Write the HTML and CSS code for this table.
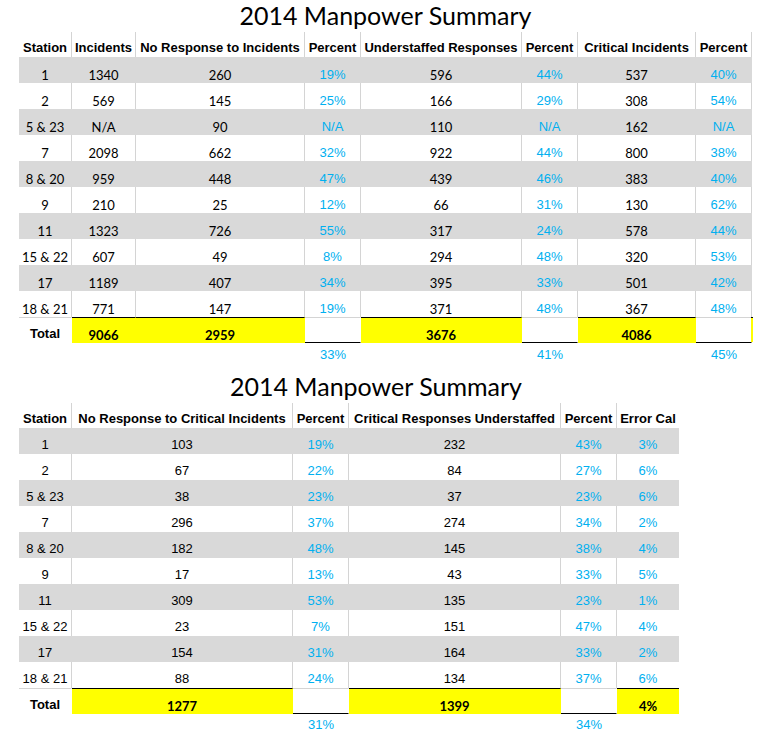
FILE: index.html
```html
<!DOCTYPE html>
<html lang="en">
<head>
<meta charset="utf-8">
<title>2014 Manpower Summary</title>
<link rel="stylesheet" href="styles.css">
</head>
<body>
<div class="sheet">
  <div class="title">2014 Manpower Summary</div>
  <table class="grid grid-top">
    <colgroup>
      <col class="c53"><col class="c64"><col class="c169"><col class="c56"><col class="c161"><col class="c56"><col class="c118"><col class="c56">
    </colgroup>
    <thead>
      <tr class="head">
        <th>Station</th><th>Incidents</th><th>No Response to Incidents</th><th>Percent</th><th>Understaffed Responses</th><th>Percent</th><th>Critical Incidents</th><th>Percent</th>
      </tr>
    </thead>
    <tbody>
      <tr class="shade"><td>1</td><td>1340</td><td>260</td><td class="pct">19%</td><td>596</td><td class="pct">44%</td><td>537</td><td class="pct">40%</td></tr>
      <tr><td>2</td><td>569</td><td>145</td><td class="pct">25%</td><td>166</td><td class="pct">29%</td><td>308</td><td class="pct">54%</td></tr>
      <tr class="shade"><td>5 &amp; 23</td><td>N/A</td><td>90</td><td class="pct">N/A</td><td>110</td><td class="pct">N/A</td><td>162</td><td class="pct">N/A</td></tr>
      <tr><td>7</td><td>2098</td><td>662</td><td class="pct">32%</td><td>922</td><td class="pct">44%</td><td>800</td><td class="pct">38%</td></tr>
      <tr class="shade"><td>8 &amp; 20</td><td>959</td><td>448</td><td class="pct">47%</td><td>439</td><td class="pct">46%</td><td>383</td><td class="pct">40%</td></tr>
      <tr><td>9</td><td>210</td><td>25</td><td class="pct">12%</td><td>66</td><td class="pct">31%</td><td>130</td><td class="pct">62%</td></tr>
      <tr class="shade"><td>11</td><td>1323</td><td>726</td><td class="pct">55%</td><td>317</td><td class="pct">24%</td><td>578</td><td class="pct">44%</td></tr>
      <tr><td>15 &amp; 22</td><td>607</td><td>49</td><td class="pct">8%</td><td>294</td><td class="pct">48%</td><td>320</td><td class="pct">53%</td></tr>
      <tr class="shade"><td>17</td><td>1189</td><td>407</td><td class="pct">34%</td><td>395</td><td class="pct">33%</td><td>501</td><td class="pct">42%</td></tr>
      <tr><td>18 &amp; 21</td><td>771</td><td>147</td><td class="pct">19%</td><td>371</td><td class="pct">48%</td><td>367</td><td class="pct">48%</td></tr>
      <tr class="total"><td class="lbl">Total</td><td class="y">9066</td><td class="y">2959</td><td class="w"></td><td class="y">3676</td><td class="w"></td><td class="y">4086</td><td class="w ext"></td></tr>
      <tr class="foot"><td></td><td></td><td></td><td class="pct">33%</td><td></td><td class="pct">41%</td><td></td><td class="pct">45%</td></tr>
    </tbody>
  </table>

  <div class="title title-2">2014 Manpower Summary</div>
  <table class="grid grid-bottom">
    <colgroup>
      <col class="c53"><col class="c221"><col class="c56"><col class="c212"><col class="c56"><col class="c62">
    </colgroup>
    <thead>
      <tr class="head">
        <th>Station</th><th>No Response to Critical Incidents</th><th>Percent</th><th>Critical Responses Understaffed</th><th>Percent</th><th class="edge">Error Cal</th>
      </tr>
    </thead>
    <tbody>
      <tr class="shade"><td>1</td><td>103</td><td class="pct">19%</td><td>232</td><td class="pct">43%</td><td class="pct edge">3%</td></tr>
      <tr><td>2</td><td>67</td><td class="pct">22%</td><td>84</td><td class="pct">27%</td><td class="pct edge">6%</td></tr>
      <tr class="shade"><td>5 &amp; 23</td><td>38</td><td class="pct">23%</td><td>37</td><td class="pct">23%</td><td class="pct edge">6%</td></tr>
      <tr><td>7</td><td>296</td><td class="pct">37%</td><td>274</td><td class="pct">34%</td><td class="pct edge">2%</td></tr>
      <tr class="shade"><td>8 &amp; 20</td><td>182</td><td class="pct">48%</td><td>145</td><td class="pct">38%</td><td class="pct edge">4%</td></tr>
      <tr><td>9</td><td>17</td><td class="pct">13%</td><td>43</td><td class="pct">33%</td><td class="pct edge">5%</td></tr>
      <tr class="shade"><td>11</td><td>309</td><td class="pct">53%</td><td>135</td><td class="pct">23%</td><td class="pct edge">1%</td></tr>
      <tr><td>15 &amp; 22</td><td>23</td><td class="pct">7%</td><td>151</td><td class="pct">47%</td><td class="pct edge">4%</td></tr>
      <tr class="shade"><td>17</td><td>154</td><td class="pct">31%</td><td>164</td><td class="pct">33%</td><td class="pct edge">2%</td></tr>
      <tr><td>18 &amp; 21</td><td>88</td><td class="pct">24%</td><td>134</td><td class="pct">37%</td><td class="pct edge">6%</td></tr>
      <tr class="total"><td class="lbl">Total</td><td class="y">1277</td><td class="w"></td><td class="y">1399</td><td class="w"></td><td class="y edge">4%</td></tr>
      <tr class="foot"><td></td><td></td><td class="pct">31%</td><td></td><td class="pct">34%</td><td></td></tr>
    </tbody>
  </table>
</div>
</body>
</html>
```

FILE: styles.css
```css
html, body {
  margin: 0;
  padding: 0;
  background: #ffffff;
  color: #000000;
}

.sheet {
  padding-left: 19px;
}

.title {
  width: 733px;
  height: 32px;
  line-height: 30px;
  font-family: Lato, "Open Sans", sans-serif;
  font-size: 25px;
  text-align: center;
  white-space: nowrap;
}

.title-2 {
  width: 714px;
  height: 40px;
  box-sizing: border-box;
  padding-top: 8px;
  line-height: 30px;
}

.grid {
  border-collapse: separate;
  border-spacing: 0;
  table-layout: fixed;
}

.grid-top { width: 733px; }
.grid-bottom { width: 660px; }

.c53 { width: 53px; }
.c56 { width: 56px; }
.c62 { width: 62px; }
.c64 { width: 64px; }
.c118 { width: 118px; }
.c161 { width: 161px; }
.c169 { width: 169px; }
.c212 { width: 212px; }
.c221 { width: 221px; }

.grid th,
.grid td {
  box-sizing: border-box;
  padding: 0;
  vertical-align: bottom;
  text-align: center;
  line-height: 16px;
  white-space: nowrap;
  border-right: 1px solid #d4d4d4;
}

.grid th {
  font-family: "Liberation Sans", Arial, sans-serif;
  font-weight: bold;
  font-size: 13px;
  padding-bottom: 1px;
}

.grid tr.head { height: 25px; }
.grid tbody tr { height: 26px; }

.grid-top td {
  font-family: Lato, "Open Sans", sans-serif;
  font-size: 13px;
}

.grid-bottom td {
  font-family: "Liberation Sans", Arial, sans-serif;
  font-size: 13px;
  padding-bottom: 1px;
}

.grid td.pct {
  font-family: "Liberation Sans", Arial, sans-serif;
  font-size: 13px;
  color: #00b0f0;
  padding-bottom: 1px;
}

.grid-top td.pct {
  padding-bottom: 0;
}

.grid .edge { border-right: 0; }

.grid tr.shade td {
  background: #d9d9d9;
  border-right-color: transparent;
}

.grid tr.total td {
  border-right-color: transparent;
}

.grid tr.total td.lbl {
  border-top: 1px solid #d4d4d4;
  font-family: "Liberation Sans", Arial, sans-serif;
  font-weight: bold;
  padding-bottom: 1px;
}

.grid tr.total td.y {
  background: #ffff00;
  border-top: 1px solid #000000;
  font-family: Lato, "Open Sans", sans-serif;
  font-weight: bold;
  color: #000000;
  padding-bottom: 0;
}

.grid tr.total td.w {
  border-top: 1px solid #d4d4d4;
  border-bottom: 1px solid #000000;
}

.grid td.ext {
  position: relative;
}

.grid td.ext::after {
  content: "";
  position: absolute;
  left: 100%;
  top: -1px;
  bottom: 0;
  width: 2px;
  background: #ffff00;
  border-top: 1px solid #000000;
}

.grid tr.foot { height: 20px; }

.grid tr.foot td {
  border: 0;
  background: transparent;
}
```
